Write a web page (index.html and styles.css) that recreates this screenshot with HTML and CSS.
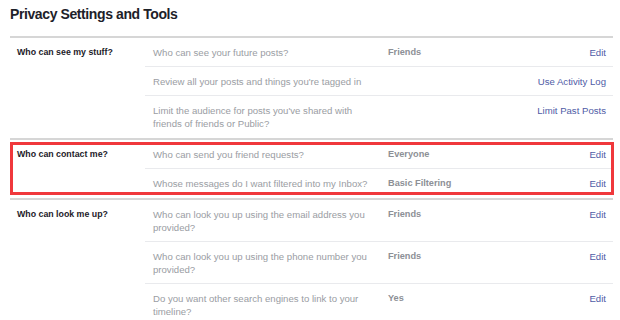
FILE: index.html
```html
<!DOCTYPE html>
<html lang="en">
<head>
    <meta charset="UTF-8">
    <title>Privacy Settings and Tools</title>
    <link rel="stylesheet" href="styles.css">
</head>
<body>
    <div class="page">
        <h1>Privacy Settings and Tools</h1>

        <!-- Who can see my stuff -->
        <div class="section">
            <div class="label">Who can see my stuff?</div>
            <div class="rows">
                <div class="row">
                    <div class="question">Who can see your future posts?</div>
                    <div class="value">Friends</div>
                    <a href="#" class="action">Edit</a>
                </div>
                <div class="row">
                    <div class="question">Review all your posts and things you're tagged in</div>
                    <div class="value"></div>
                    <a href="#" class="action">Use Activity Log</a>
                </div>
                <div class="row">
                    <div class="question">Limit the audience for posts you've shared with friends of friends or Public?</div>
                    <div class="value"></div>
                    <a href="#" class="action">Limit Past Posts</a>
                </div>
            </div>
        </div>

        <!-- Who can contact me -->
        <div class="section">
            <div class="label">Who can contact me?</div>
            <div class="rows">
                <div class="row">
                    <div class="question">Who can send you friend requests?</div>
                    <div class="value">Everyone</div>
                    <a href="#" class="action">Edit</a>
                </div>
                <div class="row">
                    <div class="question">Whose messages do I want filtered into my Inbox?</div>
                    <div class="value">Basic Filtering</div>
                    <a href="#" class="action">Edit</a>
                </div>
            </div>
            <div class="highlight"></div>
        </div>

        <!-- Who can look me up -->
        <div class="section">
            <div class="label">Who can look me up?</div>
            <div class="rows">
                <div class="row">
                    <div class="question">Who can look you up using the email address you provided?</div>
                    <div class="value">Friends</div>
                    <a href="#" class="action">Edit</a>
                </div>
                <div class="row">
                    <div class="question">Who can look you up using the phone number you provided?</div>
                    <div class="value">Friends</div>
                    <a href="#" class="action">Edit</a>
                </div>
                <div class="row">
                    <div class="question">Do you want other search engines to link to your timeline?</div>
                    <div class="value">Yes</div>
                    <a href="#" class="action">Edit</a>
                </div>
            </div>
        </div>
    </div>
</body>
</html>
```

FILE: styles.css
```css
/* General */
body {
    margin: 0;
    padding: 0;
    background: #fff;
    font-family: 'Liberation Sans', Arial, sans-serif;
    color: #1d2129;
}

.page {
    padding: 0 7px 0 10px;
}

h1 {
    margin: 0;
    padding-top: 6px;
    height: 30px;
    font-size: 14px;
    line-height: 17px;
    letter-spacing: -0.4px;
    font-weight: bold;
    color: #1d2129;
}

/* Sections */
.section {
    position: relative;
    display: grid;
    grid-template-columns: 135px 1fr;
    border-top: 2px solid #d6d6d6;
    padding-bottom: 1px;
}

.label {
    padding: 8px 0 0 7px;
    font-size: 8.8px;
    line-height: 13px;
    font-weight: bold;
    color: #1d2129;
}

/* Rows */
.row {
    display: grid;
    grid-template-columns: 235px 1fr auto;
    padding: 8px 7px 7px 8px;
    font-size: 9.6px;
    line-height: 13px;
}

.row + .row {
    border-top: 1px solid #e9eaed;
}

.question {
    padding-right: 12px;
    color: #9a9da3;
}

.value {
    font-size: 9.2px;
    font-weight: bold;
    color: #8d9096;
}

.action {
    color: #4f5ba6;
    text-decoration: none;
}

/* Red highlight drawn over the contact section */
.highlight {
    position: absolute;
    top: 2px;
    bottom: 3px;
    left: 0;
    right: -1px;
    border: 3px solid #f0383c;
    pointer-events: none;
}
```
